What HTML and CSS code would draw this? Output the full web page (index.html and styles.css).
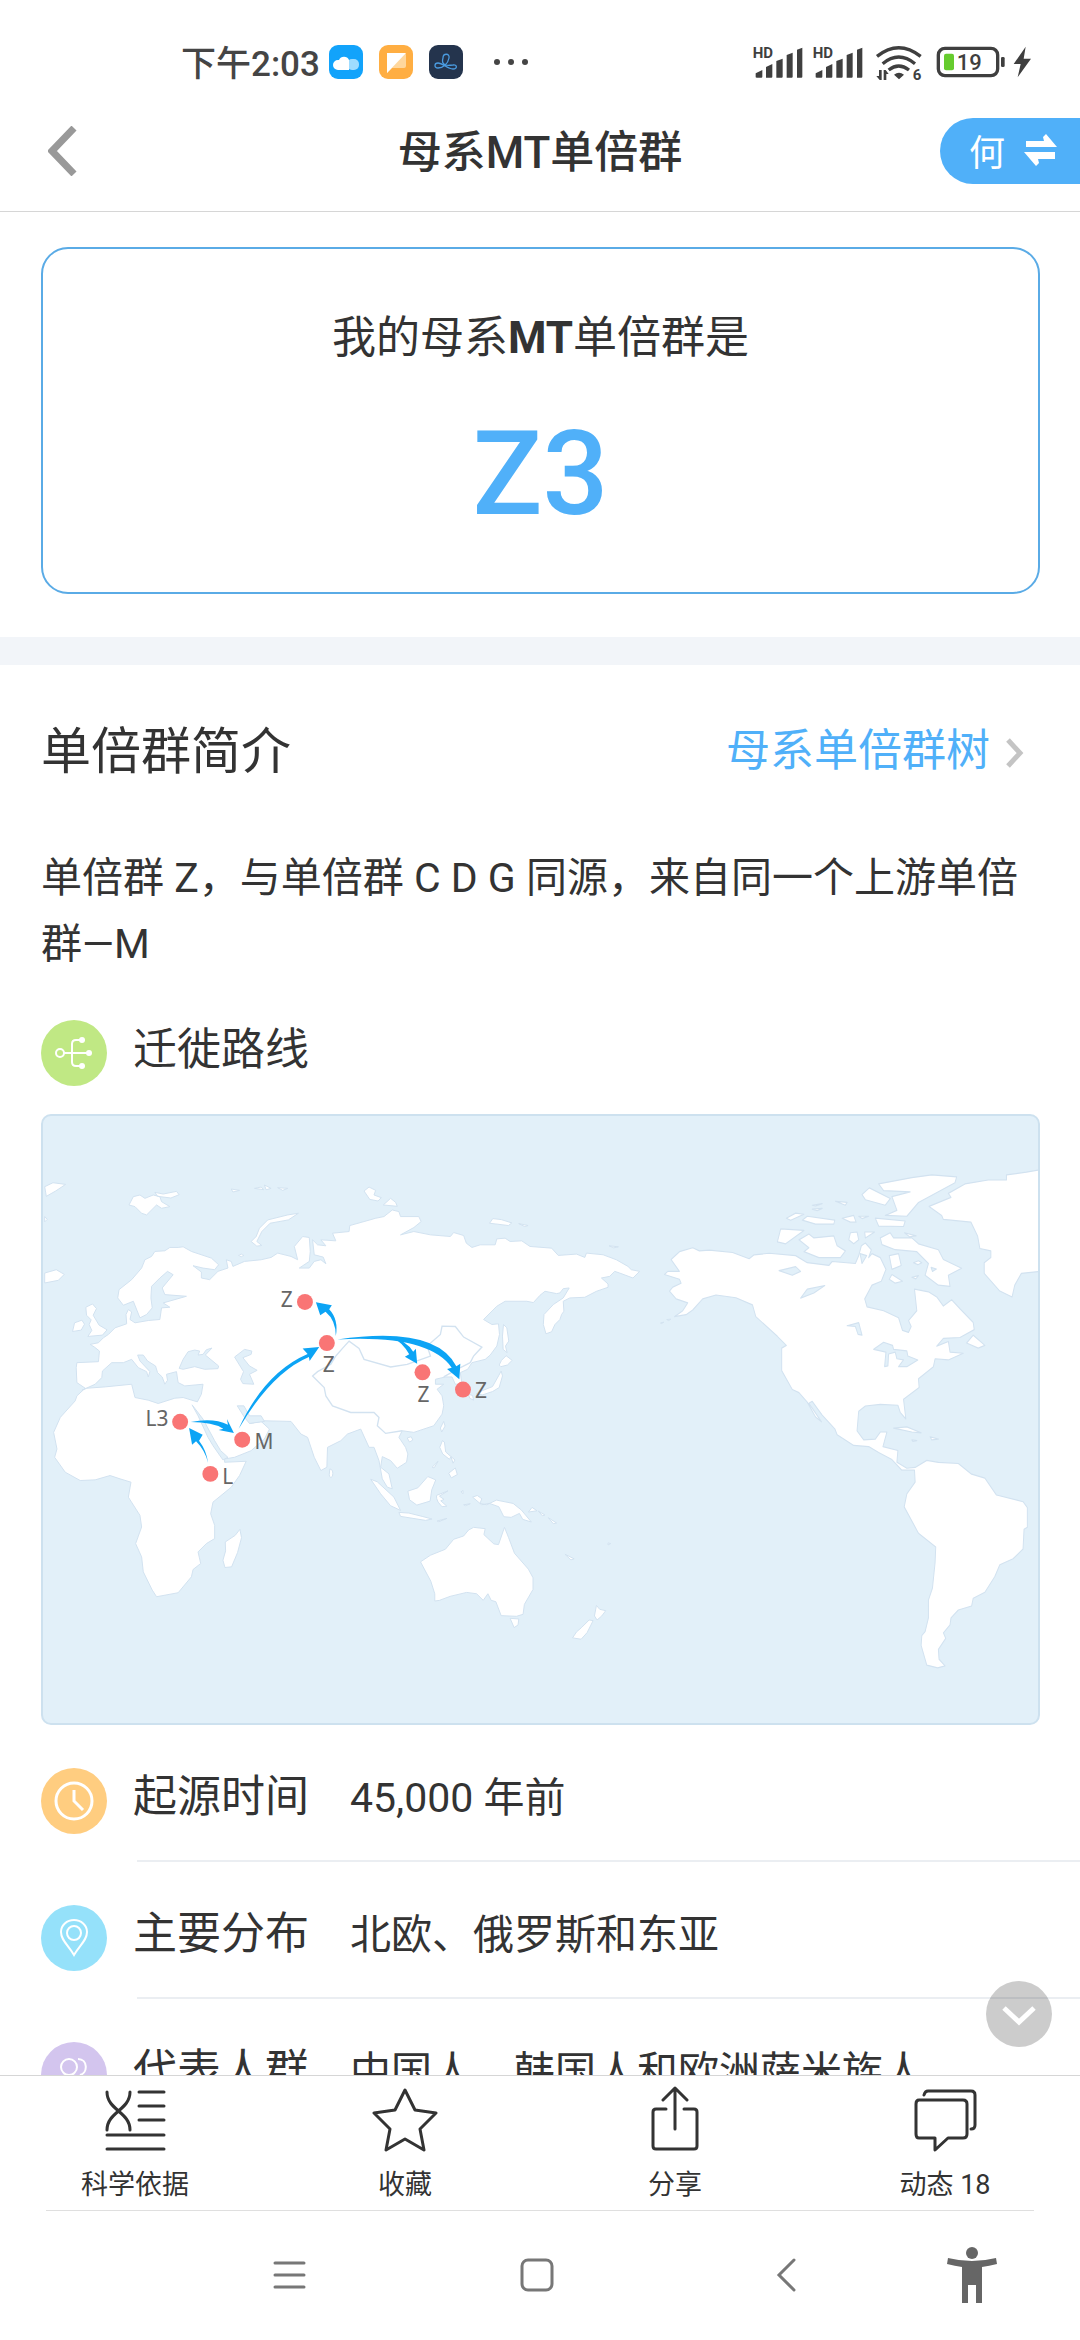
FILE: index.html
```html
<!DOCTYPE html>
<html lang="zh-CN">
<head>
  <meta charset="UTF-8">
  <meta name="viewport" content="width=device-width, initial-scale=1">
  <title>母系MT单倍群</title>
  <link rel="stylesheet" href="styles.css">
</head>
<body>

  <!-- 状态栏 -->
  <div class="status-bar">
    <div class="status-left">
      <span class="time">下午2:03</span>
      <svg class="app-icon" viewBox="0 0 34 34">
        <rect width="34" height="34" rx="9" fill="#12a3fb"/>
        <rect x="18" y="14" width="12" height="11" rx="5" fill="#9fdcff"/>
        <path d="M9 25a5 5 0 0 1 0-10h1a5.500 5.500 0 0 1 10 0v10z" fill="#fff"/>
      </svg>
      <svg class="app-icon" viewBox="0 0 34 34">
        <rect width="34" height="34" rx="9" fill="#ffae42"/>
        <path d="M8 8h17q2 0 2 2v11q0 2-2 2H13l-5 5z" fill="#ffd79c"/>
        <path d="M8 8h19L8 28z" fill="#fff"/>
      </svg>
      <svg class="app-icon" viewBox="0 0 34 34">
        <rect width="34" height="34" rx="9" fill="#24344d"/>
        <path d="M14 13c0-5 7-5 6 0-1 6-6 10-11 10-4 0-4-5 0-5 5 0 9 6 15 6 5 0 4-5 0-4-3 0-5 1-7 0-4-1-4-4-3-7z" fill="none" stroke="#4a9be0" stroke-width="1.300"/>
      </svg>
      <svg class="dots" viewBox="0 0 36 8" fill="#454545">
        <circle cx="4" cy="4" r="3"/><circle cx="18" cy="4" r="3"/><circle cx="32" cy="4" r="3"/>
      </svg>
    </div>
    <svg class="status-right" viewBox="66 66 840 120" fill="#3f3f3f">
      <text class="hd" x="68" y="113">HD</text>
      <path d="M77 172v-12l20-10v20q0 3-3 3H80zM108 173v-32l19-9v38q0 3-3 3zM139 173v-50l19-7v54q0 3-3 3zM170 173V105l18-7v72q0 3-3 3zM201 173V89l16-6v87q0 3-3 3z"/>
      <text class="hd" x="248" y="113">HD</text>
      <path d="M257 172v-12l20-10v20q0 3-3 3H260zM288 173v-32l19-9v38q0 3-3 3zM319 173v-50l19-7v54q0 3-3 3zM350 173V105l18-7v72q0 3-3 3zM381 173V89l16-6v87q0 3-3 3z"/>
      <g fill="none" stroke="#3f3f3f" stroke-width="10">
        <path d="M441 109q65-52 131 0M458 131q48-40 97 0M476 150q30-24 61 0"/>
      </g>
      <path d="M492 164q15-12 30 0l-15 14zM455 150v30h-6l-10-12h8v-18zM461 180v-30h6l9 12h-7v18z"/>
      <text class="wifi-gen" x="548" y="180">6</text>
      <rect x="625" y="85" width="178" height="82" rx="20" fill="none" stroke="#3f3f3f" stroke-width="10"/>
      <rect x="642" y="101" width="30" height="50" rx="6" fill="#66cc2e"/>
      <text class="charge" x="680" y="151">19</text>
      <rect x="813" y="111" width="11" height="30" rx="4"/>
      <path d="M887 80l-36 52h21l-9 40 40-56h-22z"/>
    </svg>
  </div>

  <!-- 标题栏 -->
  <header class="header">
    <button class="back" type="button" aria-label="返回">
      <svg viewBox="0 0 30 50"><path d="M26 2L4 25l22 23" fill="none" stroke="#999" stroke-width="7"/></svg>
    </button>
    <h1>母系MT单倍群</h1>
    <button class="switch" type="button">
      何
      <svg viewBox="0 0 33 32" fill="#fff">
        <path d="M2 7h18l-1-4 3-3 11 13H2zM31 25H14l1 4-3 3L0 18h31z"/>
      </svg>
    </button>
  </header>

  <main class="content">
    <section class="result">
      <p>我的母系<b>MT</b>单倍群是</p>
      <strong>Z3</strong>
    </section>

    <section class="intro">
      <div class="intro-head">
        <h2>单倍群简介</h2>
        <a href="#tree">母系单倍群树
          <svg viewBox="0 0 18 30"><path d="M2 2l12 13L2 28" fill="none" stroke="#c4c4c4" stroke-width="5"/></svg>
        </a>
      </div>
      <p class="intro-text">单倍群 Z，与单倍群 C D G 同源，来自同一个上游单倍群—M</p>

      <div class="route-title">
        <svg class="badge" viewBox="0 0 66 66">
          <circle cx="33" cy="33" r="33" fill="#c0e884"/>
          <g fill="none" stroke="#fff" stroke-width="2">
            <circle cx="19" cy="33" r="4"/>
            <path d="M23 33h24M41 20h-6q-4 0-4 4v18q0 4 4 4h6"/>
          </g>
          <g fill="#fff"><circle cx="48" cy="33" r="3"/><circle cx="41" cy="20" r="3"/><circle cx="41" cy="46" r="3"/></g>
        </svg>
        <h3>迁徙路线</h3>
      </div>

      <!-- 迁徙地图 -->
      <svg class="map" viewBox="33 42 2997 1827" role="img" aria-label="迁徙路线地图">
        <g class="land">
          <!-- 欧亚与非洲 -->
          <path d="M135 785L200 782 203 750 188 738 175 730 200 725 215 710 230 700 250 680 285 668 283 640 290 625 300 632 295 655 310 665 350 658 385 655 390 620 415 618 395 605 465 585 400 580 392 560 425 520 408 510 385 530 360 555 358 590 362 620 345 640 325 650 305 600 275 612 258 590 262 565 300 535 330 500 340 475 360 465 370 450 400 448 415 438 440 438 455 436 480 450 540 470 562 490 550 505 515 500 485 493 510 512 510 530 535 535 560 510 590 500 585 475 600 480 605 495 640 480 690 475 720 468 740 455 780 465 800 475 790 435 815 405 835 408 838 450 835 480 805 500 835 500 850 480 870 475 885 487 877 467 850 460 845 415 860 430 885 433 870 415 915 418 905 395 955 390 957 372 1000 360 1035 350 1060 345 1085 325 1105 330 1110 345 1165 345 1172 360 1150 378 1110 400 1150 390 1200 400 1260 405 1270 393 1300 402 1308 425 1325 438 1350 430 1395 430 1400 412 1425 410 1440 420 1475 418 1500 435 1565 440 1585 462 1640 458 1665 468 1670 455 1720 460 1760 475 1795 495 1805 505 1830 510 1810 530 1770 515 1755 510 1740 525 1715 530 1735 548 1735 558 1700 570 1665 588 1620 590 1600 600 1602 630 1595 640 1590 655 1575 670 1565 692 1548 698 1540 670 1542 640 1570 610 1600 590 1618 560 1600 562 1590 575 1580 577 1545 570 1530 582 1510 604 1490 600 1425 600 1400 615 1360 655 1385 670 1405 668 1408 700 1400 735 1380 762 1365 775 1325 785 1312 805 1290 815 1295 850 1275 850 1265 828 1245 828 1215 835 1215 850 1240 850 1220 865 1235 885 1240 915 1235 940 1210 975 1150 995 1115 990 1105 1010 1125 1040 1132 1060 1128 1085 1100 1103 1080 1080 1055 1068 1050 1100 1075 1120 1085 1165 1070 1160 1055 1135 1045 1080 1030 1040 1015 1040 990 985 950 1000 930 1020 890 1040 888 1100 870 1110 850 1070 830 1010 810 1000 780 962 700 960 655 968 690 962 715 985 700 1015 660 1050 610 1070 580 1075 580 1085 645 1082 625 1125 600 1160 545 1205 538 1240 550 1275 550 1315 525 1330 500 1355 508 1390 485 1408 480 1430 440 1478 375 1490 362 1470 335 1415 330 1370 312 1330 330 1280 325 1245 290 1190 298 1145 265 1135 235 1125 190 1138 145 1140 100 1115 68 1070 75 1045 65 995 85 950 130 900 135 885 160 862 135 845 133 800Z"/>
          <!-- 岛屿 -->
          <path d="M162 618l20-10 12 14-10 20 18 30 24 14-14 16-44 4 12-18-8-18 6-14-14-14zM128 665l22-8 8 12-10 18-26 4zM38 515l35-10 24 14-18 18-41 8zM38 255l25-12 38 5-30 20-28 16zM305 285l20-5 15 10 25-10 20 5 5 15 25 15-25 5-15-10-30 30-15-5-20-20-18-5zM370 272l25 5 40-8 8 10-25 10-40-5zM660 420l15-15 10-25 25-25 60-15 32-5-30 20-55 10-25 25-15 30 15 12-15 2zM600 262l25 4-20 5zM670 260l20-4 8 8zM700 250l20 10-15 4zM740 258l30 2-15 6zM1000 268l15-12 20 10-5 14 22 8-10 10-25-5zM1058 310l22-20 15 12 5 12zM1378 365l10-14 25 3 32 10-10 8-40-5zM1466 366l28 6-10 3zM1738 433l28 3-14 3zM622 462q8-8 16 0-8 8-16 0z"/>
          <path d="M1420 670l10 10 6 40-10 15 5 20-12-10-2-40zM1414 778l14-14 18 14-14 14-20 5-5-5zM1405 825l8-15 4 15-10 35-20 12-30 10-20-3 20-10 30-12zM1315 880l12 4 3 14-12-6z"/>
          <path d="M582 1325l30-20 14-18 5 25-12 45-18 43-20 2-6-22 8-28zM897 1105q12 2 8 22-8 8-10-4z"/>
          <path d="M1230 982l10-20 4 14-10 18zM1130 1012l12-4 5 10-10 6zM1228 1040l8-20 6 4 4 30 16 14-5 8-20-16zM1262 1068l12 10-6 10zM1255 1118l20-16 6 20-18 10zM1020 1136l20 8 50 46 20 40-30-14-30-36zM1105 1236l30 2 40 10 30 8-20 4-75-12zM1132 1172l30-10 30-34 24 10-12 30-5 34-40 12-22-16zM1218 1185l35-14-26 16 14 10-10 4 18 16-14 2-12-14-4-10zM1327 1190l14-5 14 10-6 14 20 4 30-14 50 10 25 20 30 36-26-8-10-18-25 12-22-2-15-30-28-10-24 4zM1220 1262l30-8-25 10zM1300 1213l20-3-15 6zM1292 1174l6-4v10z"/>
          <path d="M1170 1385l30-20 45-18 25-30 30-10 15-18 15-8 35 4-4 18 30 28 14 2 18-52 12 30 18 48 42 48 14 26v35l-26 45-4 30-20 6-46-2-16-42-14-4-10-20-14 20-20-20-30-4-50 12-32 12-14 2v-22l-12-38z"/>
          <path d="M1440 1555l26 2-2 18-12 8zM1700 1516l10 12 18 4-12 16-14 12-8-12zM1678 1560l12 2-8 16-10 20-18 20-26-4 12-18 16-14z"/>
          <path d="M1495 1235l26-4-15-10zM1525 1232l20 12-8 2zM1555 1252l25 16-10 2zM1605 1362l28 14-10 3zM1735 1328l8 2-8 4zM1205 1100l18-18-12 20z"/>
        </g>
        <!-- 内海 -->
        <path class="sea" d="M150 868L190 850 210 830 212 810 240 785 275 785 300 775 320 800 345 812 350 828 355 812 325 780 318 762 335 762 348 780 372 795 378 815 392 828 400 850 408 838 405 820 435 812 440 845 460 855 515 850 510 880 498 903 455 890 430 892 380 908 350 898 310 890 300 850 220 858 165 862ZM443 802L455 775 470 752 490 747 505 750 500 762 515 760 525 746 542 741 522 762 562 795 560 803 520 805 490 797 455 805ZM610 768L640 745 662 750 660 760 635 770 655 795 678 808 655 820 668 850 635 848 628 835 637 812ZM482 912L500 945 530 1010 545 1035 575 1078 590 1070 568 1050 550 1020 515 955ZM618 915L638 915 655 945 690 945 700 962 655 968 640 950Z"/>
        <path class="border" d="M915 765L935 742 955 720 985 742 1000 775 1080 798 1130 790 1200 765 1190 735 1230 700 1235 675 1275 676 1300 708 1355 738 1330 765 1320 785M1240 828L1280 805 1320 785M935 742L915 765 900 790 860 812 845 825 880 860 885 885 905 915 960 935 1030 935 1045 950 1040 975 1065 998 1115 990"/>
        <!-- 美洲 -->
        <g transform="translate(2010 0) scale(1 1.186)">
          <path class="land" d="M0 378L30 376 100 382 150 398 165 388 210 384 290 390 325 408 390 415 400 405 470 410 480 390 488 365 500 358 518 375 510 395 520 385 545 395 562 425 548 455 520 465 498 500 505 520 555 530 600 548 612 580 630 585 638 570 630 555 655 530 648 475 690 482 715 495 735 518 760 502 785 525 825 560 828 578 785 598 735 600 715 620 750 608 755 635 795 638 750 655 710 652 705 672 660 703 662 725 615 755 622 805 605 788 598 770 545 768 500 772 480 785 475 835 495 858 530 856 545 838 565 838 553 875 598 885 595 915 625 930 650 928 685 910 720 915 780 918 820 945 860 955 895 998 975 1015 988 1030 988 1080 978 1085 975 1135 945 1160 905 1175 890 1205 860 1245 825 1260 820 1280 780 1290 758 1310 755 1328 735 1348 742 1362 720 1390 722 1415 740 1432 718 1437 685 1430 668 1380 670 1355 680 1345 690 1310 690 1265 702 1235 710 1170 712 1130 660 1095 617 1028 625 995 650 965 648 935 610 935 580 908 540 890 510 875 465 872 415 845 408 830 370 795 340 760 330 765 368 812 350 800 325 762 300 738 280 730 248 682 248 625 262 618 235 595 170 545 160 515 110 497 50 490 10 500 -20 528 -40 540 -75 545 -50 530 -35 510 -70 500 -90 480 -80 470 -55 460 -60 450 -105 438 -95 430 -60 430 -85 400 -60 380 -20 370Z"/>
          <path class="land" d="M1025 172L985 178 925 185 925 198 870 198 800 208 750 232 758 242 692 265 730 288 735 298 818 305 838 340 845 372 878 378 878 395 858 408 858 435 905 480 942 495 950 465 970 435 1025 430ZM245 322L315 326 260 360 235 355ZM262 295L290 282 315 285 275 300ZM310 300L325 290 408 300 405 310 350 310ZM300 350L330 335 345 345 405 340 415 365 440 378 425 395 360 395 315 380 330 370ZM490 235L512 218 575 245 560 262 500 248ZM540 208L640 192 700 185 775 190 770 205 660 255 625 290 560 288 595 275 580 240 635 228 555 225ZM530 295L620 302 615 316 540 315ZM430 295L465 288 472 305 455 305ZM455 332L475 330 480 350 465 360 450 350ZM498 330L528 330 500 345ZM545 345L575 332 585 345 640 345 660 360 720 375 735 400 790 422 750 440 755 468 720 465 680 440 690 410 655 380 590 375 550 362ZM572 390L600 385 608 415 580 425ZM572 450L580 438 612 455 590 460ZM645 408l15-5 10 5-12 5zM640 445l20-4-8 8zM480 290L510 290 490 296ZM410 252L445 255 440 262ZM340 262l30-4-20 6zM340 272l30-2-15 6zM805 612L825 592 860 618 840 625ZM585 828L625 825 668 840 640 838ZM695 850L720 856 700 858ZM640 858l15 2-12 2zM618 332l35 8-20 2z"/>
          <path class="sea" d="M240 428L290 418 305 430 280 440ZM305 498L325 475 378 466 345 485ZM445 568L480 560 490 592 478 590 470 570ZM525 628L555 610 582 618 585 628 625 632 628 645 658 655 625 672 600 672 615 655 595 652 590 635 570 640 568 670 558 672 562 635ZM698 420l16 4-12 6zM484 385l20 5-14 20z"/>
        </g>
        <path class="land" d="M1893 665l10-2-8 5zM1912 655l12-1-8 5zM38 345l8 8-8 8z"/>

        <g class="arrow">
          <path d="M622 985Q700 815 830 759L815 742 865 738 836 780 834 768Q722 815 622 985Z"/>
          <path d="M478 964Q545 950 590 972L587 955 608 997 562 988 576 984Q545 964 478 964Z"/>
          <path d="M530 1087Q526 1050 503 1020L514 1002 473 982 482 1032 494 1022Q522 1050 530 1087Z"/>
          <path d="M915 705Q924 655 895 624L903 612 855 603 868 642 884 632Q915 658 915 705Z"/>
          <path d="M920 715Q1215 672 1278 796L1290 788 1287 835 1250 804 1264 800Q1195 700 920 715Z"/>
          <path d="M1080 707Q1127 718 1148 752L1156 743 1160 788 1123 767 1136 760Q1115 722 1080 707Z"/>
        </g>
        <g class="pin">
          <circle cx="822" cy="602" r="24"/><circle cx="888" cy="726" r="24"/><circle cx="1176" cy="814" r="24"/>
          <circle cx="1298" cy="866" r="24"/><circle cx="446" cy="963" r="24"/><circle cx="633" cy="1017" r="24"/>
          <circle cx="537" cy="1120" r="24"/>
        </g>
        <g class="pin-label">
          <text x="749" y="618">Z</text><text x="876" y="812">Z</text><text x="1161" y="902">Z</text>
          <text x="1334" y="890">Z</text><text x="342" y="977">L3</text><text x="670" y="1044">M</text>
          <text x="573" y="1149">L</text>
        </g>
      </svg>
    </section>

    <!-- 单倍群信息 -->
    <dl class="info">
      <div class="info-line">
        <svg class="badge" viewBox="0 0 66 66">
          <circle cx="33" cy="33" r="33" fill="#ffcd80"/>
          <g fill="none" stroke="#fff" stroke-width="3"><circle cx="33" cy="33" r="18"/><path d="M33 22v11l9 9"/></g>
        </svg>
        <dt>起源时间</dt>
        <dd>45,000 年前</dd>
      </div>
      <div class="info-line">
        <svg class="badge" viewBox="0 0 66 66">
          <circle cx="33" cy="33" r="33" fill="#95e1fa"/>
          <g fill="none" stroke="#fff" stroke-width="2"><path d="M33 50C27 40 20 35 20 27a13 12 0 0 1 26 0c0 8-7 13-13 23z"/><circle cx="33" cy="28" r="7"/></g>
        </svg>
        <dt>主要分布</dt>
        <dd>北欧、俄罗斯和东亚</dd>
      </div>
      <div class="info-line">
        <svg class="badge" viewBox="0 0 66 66">
          <circle cx="33" cy="33" r="33" fill="#d3c5ee"/>
          <g fill="none" stroke="#fff" stroke-width="2"><circle cx="28" cy="25" r="8"/><path d="M17 47q-2-14 11-14t12 14zM37 17c10 0 10 14 2 16 8 1 11 6 10 12"/></g>
        </svg>
        <dt>代表人群</dt>
        <dd>中国人、韩国人和欧洲萨米族人</dd>
      </div>
    </dl>

    <button class="scroll-down" type="button" aria-label="向下">
      <svg viewBox="0 0 34 20"><path d="M2 2l15 14L32 2" fill="none" stroke="#fff" stroke-width="5"/></svg>
    </button>
  </main>

  <!-- 底部操作 -->
  <nav class="tabs">
    <button type="button">
      <svg viewBox="0 0 66 66"><path d="M5 6c0 18 23 20 23 38M28 6c0 18-23 20-23 38M37 6h25M37 20h25M37 34h25M5 49h57M5 63h57"/></svg>
      科学依据
    </button>
    <button type="button">
      <svg viewBox="0 0 66 66"><path d="M33 4l10 20 21 3-16 16 4 21-19-11-19 11 4-21L2 27l21-3z"/></svg>
      收藏
    </button>
    <button type="button">
      <svg viewBox="0 0 66 66"><path d="M33 43V2M21 14L33 2l12 12M24 23H14q-3 0-3 3v34q0 3 3 3h38q3 0 3-3V26q0-3-3-3H42"/></svg>
      分享
    </button>
    <button type="button">
      <svg viewBox="0 0 66 66"><path d="M7 14h44q4 0 4 4v30q0 4-4 4H36L23 64V52H7q-3 0-3-4V18q0-4 3-4zM12 9q1-4 4-4h43q4 0 4 4v30q0 4-4 4"/></svg>
      动态 18
    </button>
  </nav>

  <!-- 系统导航 -->
  <footer class="system-nav">
    <button type="button" aria-label="最近任务"><svg viewBox="0 0 60 60"><path d="M16 18h29M16 30h29M16 42h29"/></svg></button>
    <button type="button" aria-label="主屏幕"><svg viewBox="0 0 60 60"><rect x="15" y="15" width="30" height="30" rx="6"/></svg></button>
    <button type="button" aria-label="返回"><svg viewBox="0 0 60 60"><path d="M38 15L23 30l15 15"/></svg></button>
    <button type="button" aria-label="无障碍"><svg class="solid" viewBox="0 0 60 60"><circle cx="30" cy="8" r="6"/><path d="M6 13q24 6 48 0l1 6q-8 2-15 3v36h-6V40h-8v18h-6V22q-7-1-15-3z"/></svg></button>
  </footer>

</body>
</html>
```
FILE: styles.css
```css
* {
  box-sizing: border-box;
}

body {
  margin: 0;
  height: 100vh;
  display: flex;
  flex-direction: column;
  overflow: hidden;
  background: #fff;
  color: #333;
  font-family: Roboto, "Noto Sans CJK SC", sans-serif;
}

h1, h2, h3, p, dl, dt, dd {
  margin: 0;
  font-weight: 400;
}

button {
  padding: 0;
  border: 0;
  background: none;
  color: inherit;
  font-family: inherit;
}

svg {
  display: block;
  flex: none;
}

/* 状态栏 */
.status-bar {
  flex: none;
  height: 90px;
  padding: 34px 48px 0 181px;
  display: flex;
  justify-content: space-between;
  align-items: center;
}

.status-left {
  display: flex;
  align-items: center;
  gap: 16px;
}

.time {
  margin-right: -7px;
  padding-bottom: 4px;
  font-size: 35px;
  font-weight: 500;
  color: #454545;
}

.app-icon {
  width: 34px;
  height: 34px;
}

.dots {
  width: 36px;
  margin-left: 14px;
}

.status-right {
  width: 280px;
  height: 40px;
  overflow: visible;
}

.hd {
  font-size: 45px;
  font-weight: 700;
}

.wifi-gen {
  font-size: 45px;
  font-weight: 700;
}

.charge {
  font-size: 66px;
  font-weight: 500;
}

/* 标题栏 */
.header {
  flex: none;
  height: 122px;
  display: grid;
  grid-template-columns: 1fr auto 1fr;
  align-items: center;
  border-bottom: 1px solid #d6d6d6;
}

.header h1 {
  padding-bottom: 4px;
  font-size: 44px;
  font-weight: 500;
}

.back {
  justify-self: start;
  margin-left: 48px;
}

.back svg {
  width: 30px;
}

.switch {
  justify-self: end;
  display: flex;
  align-items: center;
  justify-content: space-between;
  width: 140px;
  height: 66px;
  padding: 0 23px 2px 29px;
  border-radius: 33px 0 0 33px;
  background: #50b0f9;
  color: #fff;
  font-size: 36px;
}

.switch svg {
  width: 33px;
}

/* 主体 */
.content {
  position: relative;
  flex: 1;
  min-height: 0;
  overflow: hidden;
}

.result {
  margin: 35px 40px 43px 41px;
  padding: 57px 0 52px;
  border: 2px solid #5aabe6;
  border-radius: 27px;
  text-align: center;
}

.result p {
  font-size: 44px;
  line-height: 64px;
}

.result b {
  font-weight: 700;
}

.result strong {
  display: block;
  margin-top: 38px;
  font-size: 116px;
  line-height: 132px;
  font-weight: 500;
  color: #50b0f9;
}

.intro {
  padding: 52px 40px 0 41px;
  border-top: 28px solid #f2f5f9;
}

.intro-head {
  display: flex;
  justify-content: space-between;
  align-items: center;
  padding-right: 16px;
}

.intro-head h2 {
  font-size: 50px;
  line-height: 70px;
}

.intro-head a {
  display: flex;
  align-items: center;
  gap: 16px;
  color: #50b0f9;
  font-size: 44px;
  line-height: 60px;
  padding-bottom: 2px;
  text-decoration: none;
}

.intro-head svg {
  width: 18px;
  margin-top: 4px;
}

.intro-text {
  margin-top: 58px;
  font-size: 41px;
  line-height: 66px;
}

.route-title {
  display: flex;
  align-items: center;
  margin: 43px 0 28px;
}

.badge {
  width: 66px;
  height: 66px;
}

.route-title h3,
.info dt {
  margin-left: 26px;
  padding-bottom: 7px;
  font-size: 44px;
  line-height: 58px;
}

.map {
  width: 100%;
  border: 2px solid #cde1ef;
  border-radius: 10px;
  background: #e2f0f9;
}

.land {
  fill: #fff;
  stroke: #d2e2f0;
  stroke-width: 3;
  stroke-linejoin: round;
}

.sea {
  fill: #e2f0f9;
  stroke: #d2e2f0;
  stroke-width: 3;
  stroke-linejoin: round;
}

.border {
  fill: none;
  stroke: #d2e2f0;
  stroke-width: 4;
}

.arrow {
  fill: #0ca4f5;
}

.pin {
  fill: #f97575;
}

.pin-label {
  fill: #666;
  font-family: "Noto Sans", sans-serif;
  font-size: 63px;
}

/* 信息行 */
.info-line {
  display: flex;
  align-items: center;
  padding: 43px 0 26px 41px;
}

.info-line + .info-line {
  border-top: 2px solid #ebeef2;
  border-image: linear-gradient(to right, transparent 138px, #ebeef2 138px) 2;
}

.info dd {
  margin-left: 41px;
  padding-bottom: 6px;
  font-size: 41px;
  line-height: 60px;
  white-space: nowrap;
}

.scroll-down {
  position: absolute;
  right: 28px;
  bottom: 28px;
  width: 66px;
  height: 66px;
  border-radius: 50%;
  background: rgba(0, 0, 0, 0.2);
}

.scroll-down svg {
  width: 34px;
  margin: 4px auto 0;
}

/* 底部操作 */
.tabs {
  flex: none;
  display: grid;
  grid-template-columns: repeat(4, 1fr);
  border-top: 1px solid #d6d6d6;
  padding: 10px 0 4px;
}

.tabs button {
  display: flex;
  flex-direction: column;
  align-items: center;
  gap: 12px;
  font-size: 27px;
  line-height: 42px;
}

.tabs svg {
  width: 66px;
  fill: none;
  stroke: #333;
  stroke-width: 3;
  stroke-linecap: round;
  stroke-linejoin: round;
}

/* 系统导航 */
.system-nav {
  flex: none;
  height: 130px;
  margin: 0 46px;
  padding: 0 0 2px 11%;
  display: grid;
  grid-template-columns: 2fr 2fr 2fr 1fr;
  place-items: center;
  border-top: 1px solid #dfdfdf;
}

.system-nav svg {
  width: 60px;
  fill: none;
  stroke: #777;
  stroke-width: 3;
  stroke-linecap: round;
}

.system-nav .solid {
  fill: #666;
  stroke: none;
}
```
